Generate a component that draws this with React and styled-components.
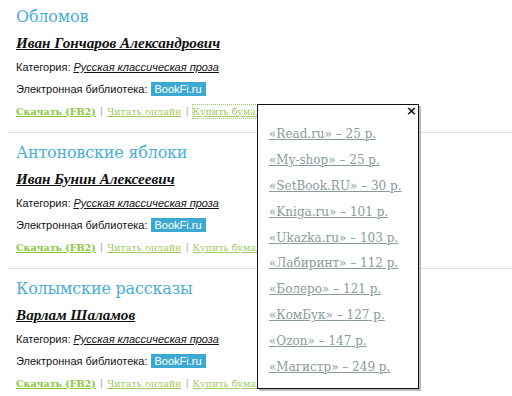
import React from "react";
import styled, { createGlobalStyle } from "styled-components";

const BOOKS = [
  { title: "Обломов", author: "Иван Гончаров Александрович" },
  { title: "Антоновские яблоки", author: "Иван Бунин Алексеевич" },
  { title: "Колымские рассказы", author: "Варлам Шаламов" },
];

const SHOPS = [
  ["Read.ru", 25],
  ["My-shop", 25],
  ["SetBook.RU", 30],
  ["Kniga.ru", 101],
  ["Ukazka.ru", 103],
  ["Лабиринт", 112],
  ["Болеро", 121],
  ["КомБук", 127],
  ["Ozon", 147],
  ["Магистр", 249],
];

const GlobalStyle = createGlobalStyle`
  html, body {
    margin: 0;
    padding: 0;
    background: #fff;
  }
  body {
    width: 512px;
    height: 396px;
    overflow: hidden;
  }
`;

const Page = styled.div`
  position: relative;
`;

const Book = styled.article`
  margin-left: 8px;
  padding: 3px 0 10px 8px;
  border-bottom: 1px solid #e2e2e2;
  display: flex;
  flex-direction: column;
  & + & {
    padding-top: 6px;
  }
`;

const Title = styled.h2`
  margin: 0;
  height: 27px;
  line-height: 27px;
  font-family: "DejaVu Serif", Georgia, serif;
  font-weight: normal;
  font-size: 16px;
  letter-spacing: -0.2px;
  color: #4aaed2;
`;

const Author = styled.a`
  align-self: flex-start;
  height: 26px;
  line-height: 25px;
  font-family: "Liberation Serif", "Times New Roman", serif;
  font-style: italic;
  font-size: 15.2px;
  font-weight: bold;
  color: #111;
  text-decoration: underline;
`;

const Line = styled.div`
  height: 22px;
  line-height: 22px;
  display: flex;
  align-items: center;
  font-family: "Liberation Sans", Arial, sans-serif;
  font-size: 11px;
  color: #111;
  white-space: nowrap;
`;

const Category = styled.a`
  margin-left: 3px;
  font-style: italic;
  color: #111;
  text-decoration: underline;
`;

const Badge = styled.span`
  margin-left: 3px;
  padding: 0 4px;
  height: 14px;
  line-height: 14px;
  background: #3ba9d2;
  color: #fff;
  font-size: 11px;
`;

const Links = styled.div`
  height: 22px;
  line-height: 22px;
  display: flex;
  align-items: center;
  gap: 4px;
  font-family: "DejaVu Serif", Georgia, serif;
  font-size: 9.5px;
  white-space: nowrap;
  color: #999;
`;

const Action = styled.a`
  display: inline-block;
  line-height: 13px;
  color: ${(p) => (p.$main ? "#8cc63e" : "#9fcb62")};
  font-weight: ${(p) => (p.$main ? "bold" : "normal")};
  text-decoration: underline;
  outline: ${(p) => (p.$focus ? "1px dotted #9fcb62" : "none")};
`;

const Popup = styled.div`
  position: absolute;
  left: 257px;
  top: 104px;
  width: 162px;
  height: 285px;
  background: #fff;
  border: 1px solid #111;
  box-shadow: 2px 2px 0 #bbb;
  padding: 16px 0 0 11px;
  box-sizing: border-box;
  display: flex;
  flex-direction: column;
`;

const Close = styled.span`
  position: absolute;
  right: 1px;
  top: -2px;
  font-family: "DejaVu Sans", sans-serif;
  font-weight: bold;
  font-size: 13px;
  color: #111;
`;

const Shop = styled.a`
  height: 25.9px;
  line-height: 26px;
  font-family: "DejaVu Serif", Georgia, serif;
  font-size: 12px;
  color: #8a9a9c;
  text-decoration: underline;
  white-space: nowrap;
`;

function App() {
  return (
    <>
      <GlobalStyle />
      <Page>
        {BOOKS.map((b, i) => (
          <Book key={b.title}>
            <Title>{b.title}</Title>
            <Author href="#">{b.author}</Author>
            <Line>
              Категория:<Category href="#">Русская классическая проза</Category>
            </Line>
            <Line>
              Электронная библиотека:<Badge>BookFi.ru</Badge>
            </Line>
            <Links>
              <Action $main href="#">Скачать (FB2)</Action>|
              <Action href="#">Читать онлайн</Action>|
              <Action $focus={i === 0} href="#">Купить бумажную книгу</Action>
            </Links>
          </Book>
        ))}
        <Popup>
          <Close>×</Close>
          {SHOPS.map(([name, price]) => (
            <Shop key={name} href="#">
              «{name}» – {price} р.
            </Shop>
          ))}
        </Popup>
      </Page>
    </>
  );
}

export default App;
